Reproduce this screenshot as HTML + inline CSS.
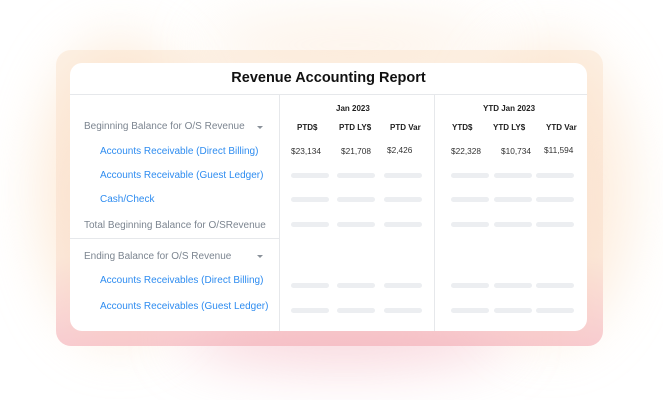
<!DOCTYPE html>
<html><head><style>
*{margin:0;padding:0;box-sizing:border-box}
body{width:663px;height:400px;background:#fff;position:relative;overflow:hidden;font-family:"Liberation Sans",sans-serif}
.glow{position:absolute;filter:blur(28px);border-radius:50%}
.frame{position:absolute;left:56px;top:50px;width:547px;height:296px;border-radius:15px;background:linear-gradient(180deg,rgba(250,225,200,.45),rgba(248,215,195,.45) 70%,rgba(243,170,178,.6));}
.card{position:absolute;left:70px;top:63px;width:517px;height:268px;border-radius:12px;background:#fff;overflow:hidden}
.title{position:absolute;left:0;right:0;top:7px;text-align:center;font-size:14.5px;color:#111;font-weight:bold}
.hl{position:absolute;background:#e6e8eb}
.t{position:absolute;font-size:10px;white-space:nowrap}
.g{color:#7c8590}
.b{color:#2e8cf0}
.h{font-size:8px;font-weight:bold;color:#222}
.v{font-size:8.3px;color:#333}
.bar{position:absolute;height:5px;width:38px;border-radius:3px;background:#eceef1}
.car{position:absolute;width:0;height:0;border-left:3px solid transparent;border-right:3px solid transparent;border-top:3px solid #8a919a}
</style></head><body>
<div class="glow" style="left:40px;top:40px;width:160px;height:300px;background:rgba(250,210,170,.45)"></div>
<div class="glow" style="left:470px;top:40px;width:160px;height:300px;background:rgba(250,210,170,.4)"></div>
<div class="glow" style="left:180px;top:305px;width:330px;height:60px;background:rgba(240,160,172,.45)"></div>
<div class="glow" style="left:200px;top:20px;width:300px;height:50px;background:rgba(250,220,190,.4)"></div>
<div class="frame"></div>
<div class="card">
<div class="title">Revenue Accounting Report</div>
<div class="hl" style="left:0;right:0;top:31px;height:1px"></div>
<div class="hl" style="left:209px;top:31px;bottom:0;width:1px"></div>
<div class="hl" style="left:364px;top:31px;bottom:0;width:1px"></div>
<div class="hl" style="left:0;width:209px;top:175px;height:1px"></div>

<div class="t g" style="left:14px;top:58px">Beginning Balance for O/S Revenue</div><div class="car" style="left:187px;top:63px"></div>
<div class="t b" style="left:30px;top:83px">Accounts Receivable (Direct Billing)</div>
<div class="t b" style="left:30px;top:107px">Accounts Receivable (Guest Ledger)</div>
<div class="t b" style="left:30px;top:131px">Cash/Check</div>
<div class="t g" style="left:14px;top:157px">Total Beginning Balance for O/SRevenue</div>
<div class="t g" style="left:14px;top:188px">Ending Balance for O/S Revenue</div><div class="car" style="left:187px;top:192px"></div>
<div class="t b" style="left:30px;top:212px">Accounts Receivables (Direct Billing)</div>
<div class="t b" style="left:30px;top:238px">Accounts Receivables (Guest Ledger)</div>

<div class="t h" style="left:266px;top:41px">Jan 2023</div>
<div class="t h" style="left:413px;top:41px">YTD Jan 2023</div>
<div class="t h" style="left:227px;top:60px">PTD$</div>
<div class="t h" style="left:269px;top:60px">PTD LY$</div>
<div class="t h" style="left:320px;top:60px">PTD Var</div>
<div class="t h" style="left:382px;top:60px">YTD$</div>
<div class="t h" style="left:423px;top:60px">YTD LY$</div>
<div class="t h" style="left:476px;top:60px">YTD Var</div>
<div class="t v" style="left:221px;top:83px">$23,134</div>
<div class="t v" style="left:271px;top:83px">$21,708</div>
<div class="t v" style="left:317px;top:82px">$2,426</div>
<div class="t v" style="left:381px;top:83px">$22,328</div>
<div class="t v" style="left:431px;top:83px">$10,734</div>
<div class="t v" style="left:474px;top:82px">$11,594</div>
</div>
<div id="bars"></div>
<script>
var xs=[291,337,384,451,494,536],ys=[173,197,222,283,308],h='';
ys.forEach(function(y){xs.forEach(function(x){h+='<div class="bar" style="left:'+x+'px;top:'+y+'px"></div>'})});
document.getElementById('bars').innerHTML=h;
</script>
</body></html>
